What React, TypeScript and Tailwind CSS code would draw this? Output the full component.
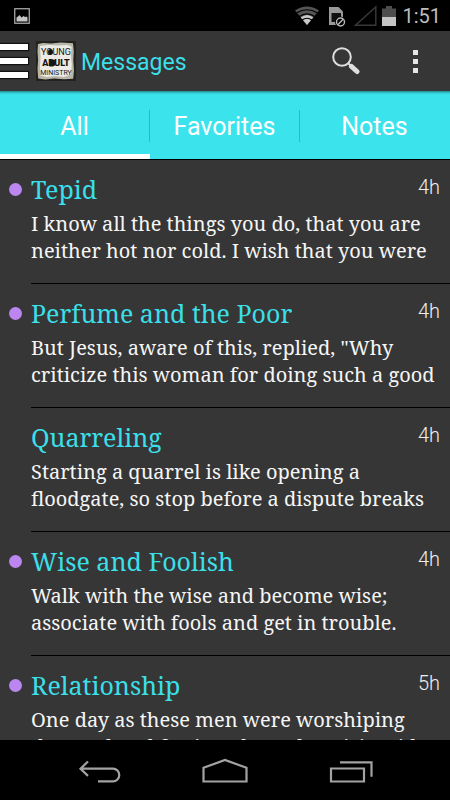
import React, { useState } from 'react';

interface Message {
    id: number;
    title: string;
    body: string;
    age: string;
    unread: boolean;
}

const messages: Message[] = [
    { id: 1, title: 'Tepid', body: 'I know all the things you do, that you are neither hot nor cold. I wish that you were', age: '4h', unread: true },
    { id: 2, title: 'Perfume and the Poor', body: 'But Jesus, aware of this, replied, "Why criticize this woman for doing such a good', age: '4h', unread: true },
    { id: 3, title: 'Quarreling', body: 'Starting a quarrel is like opening a floodgate, so stop before a dispute breaks', age: '4h', unread: false },
    { id: 4, title: 'Wise and Foolish', body: 'Walk with the wise and become wise; associate with fools and get in trouble.', age: '4h', unread: true },
    { id: 5, title: 'Relationship', body: 'One day as these men were worshiping the Lord and fasting, the Holy Spirit said', age: '5h', unread: true },
];

const tabs = ['All', 'Favorites', 'Notes'];

const StatusBar: React.FC = () => (
    <div className="flex h-[31px] shrink-0 items-center justify-between bg-black pl-[14px] pr-[9px]">
        <svg width="16" height="16" viewBox="0 0 16 16" aria-hidden="true">
            <rect x="0.75" y="0.75" width="14.5" height="14.5" fill="none" stroke="#b4b4b4" strokeWidth="1.2" />
            <path d="M2.500 13.500V9.500l1.500-1 1.500-1.500 2 2.500 2-1.500 1.500 1 1.500-.5 1 1v4z" fill="#c4c4c4" />
        </svg>
        <div className="flex items-center">
            <svg width="82" height="22" viewBox="0 0 82 22" aria-hidden="true">
                {/* wifi */}
                <path d="M0 5.500Q12 -2.500 24 5.500L12 20z" fill="#555" />
                <path d="M5.800 12.500Q12 7.500 18.200 12.500L12 20z" fill="#c9c9c9" />
                <path d="M1.500 8Q12 1.500 22.500 8M4.200 11.600Q12 6 19.800 11.600M7 15Q12 11.500 17 15" fill="none" stroke="#000" strokeWidth="1.200" />
                {/* sim card */}
                <path d="M34 2h9.500l4.500 4.500V20H34z" fill="#999" />
                <path d="M36.500 8h9.500v9h-9.500z" fill="#111" />
                <circle cx="45.500" cy="17" r="5.500" fill="#000" />
                <circle cx="45.500" cy="17" r="4" fill="none" stroke="#bbb" strokeWidth="1.400" />
                <path d="M42.800 19.700l5.400-5.400" stroke="#bbb" strokeWidth="1.400" />
                {/* signal */}
                <path d="M60.500 20.300H80.800V2z" fill="none" stroke="#383838" strokeWidth="1.500" />
            </svg>
            <svg className="ml-[5px]" width="14" height="20" viewBox="0 0 14 20" aria-hidden="true">
                <path d="M4 0h6v2.500h4V11H0V2.500h4z" fill="#4d4d4d" />
                <path d="M0 11h14v9H0z" fill="#c4c4c4" />
            </svg>
            <span className="ml-[6px] text-[20px] leading-[26px] text-[#bdbdbd]">1:51</span>
        </div>
    </div>
);

const Logo: React.FC = () => (
    <svg width="40" height="40" viewBox="0 0 40 40" role="img" aria-label="Young Adult Ministry">
        <rect width="40" height="40" fill="#24221f" />
        <path d="M2 3l5-1 8 .5L25 1.500l12 .8.800 8-.5 9 .7 10-.8 8.500-9 .4-10-.6-9 .8-7-.8L1.500 28l.6-9-.6-9z" fill="#b8b5a9" />
        <path d="M4 5l8-1 10 .5 9-.5 4.500 1.500-.5 9 .8 9-.8 10L28 36l-9-1-8 1-6.500-1.500L4 25l.6-9z" fill="#ecebe5" />
        <g fontFamily="Roboto, sans-serif" fill="#161616" textAnchor="middle">
            <text x="20" y="14" fontSize="9">YOUNG</text>
            <text x="20" y="25" fontSize="9" fontWeight="900">ADULT</text>
            <text x="20" y="34" fontSize="7">MINISTRY</text>
        </g>
        <ellipse cx="14.500" cy="11" rx="2.500" ry="3" fill="#161616" />
        <path d="M13.500 18.500h3q3.500 0 3.500 3.300T16.500 25.500h-3z" fill="#161616" />
    </svg>
);

const ActionBar: React.FC = () => (
    <header className="flex h-[60px] shrink-0 items-center bg-[#363636]">
        <button type="button" aria-label="Open menu" className="flex flex-col gap-2">
            <span className="h-[6px] w-7 bg-white shadow-[0_0_1px_1px_#111]" />
            <span className="h-[6px] w-7 bg-white shadow-[0_0_1px_1px_#111]" />
            <span className="h-[6px] w-7 bg-white shadow-[0_0_1px_1px_#111]" />
        </button>
        <div className="ml-2">
            <Logo />
        </div>
        <h1 className="ml-[5px] flex-1 pt-1 text-[23px] leading-8 text-[#3bdfe8]">Messages</h1>
        <button type="button" aria-label="Search" className="mr-[53px]">
            <svg width="28" height="28" viewBox="0 0 28 28">
                <circle cx="10" cy="10" r="8.800" fill="none" stroke="#dedede" strokeWidth="2" />
                <path d="M16 16l3.500 3.500" stroke="#dedede" strokeWidth="2" />
                <path d="M19.500 19.500l5.500 5" stroke="#dedede" strokeWidth="5" strokeLinecap="round" />
            </svg>
        </button>
        <button type="button" aria-label="More options" className="mr-8 flex flex-col gap-1">
            <span className="size-[5px] bg-[#e6e6e6]" />
            <span className="size-[5px] bg-[#e6e6e6]" />
            <span className="size-[5px] bg-[#e6e6e6]" />
        </button>
    </header>
);

const MessageRow: React.FC<{ message: Message }> = ({ message }) => (
    <li className="flex pl-[9px]">
        <div className="w-[22px] shrink-0 pt-[23px]">
            {message.unread && <span className="block size-[13px] rounded-full bg-[#bb86f0]" />}
        </div>
        <div className="h-[124px] min-w-0 flex-1 border-b border-black pt-[13px]">
            <div className="flex items-start justify-between pr-[10px]">
                <h2 className="font-['Noto_Serif','Droid_Serif',serif] text-[25px] leading-8 text-[#3bdfe8]">
                    {message.title}
                </h2>
                <span className="text-[20px] leading-7 font-light text-[#eee]">{message.age}</span>
            </div>
            <p className="mt-[5px] line-clamp-2 pr-[14px] font-['Noto_Serif','Droid_Serif',serif] text-[20px] leading-[27px] text-[#f5f5f5]">
                {message.body}
            </p>
        </div>
    </li>
);

const NavBar: React.FC = () => (
    <nav className="flex h-[60px] shrink-0 items-center justify-center gap-[80px] bg-black">
        <button type="button" aria-label="Back">
            <svg width="46" height="26" viewBox="0 0 46 26" fill="none" stroke="#a3a3a3" strokeWidth="2.200">
                <path d="M12 4.500L4.500 11.700l7.500 7.200M4.500 11.700H37a6.300 6.300 0 0 1 0 12.600H22" />
            </svg>
        </button>
        <button type="button" aria-label="Home">
            <svg width="46" height="26" viewBox="0 0 46 26" fill="none" stroke="#a3a3a3" strokeWidth="2.200">
                <path d="M1.500 24.500V10.800L23 3 44.500 10.800v13.700z" />
            </svg>
        </button>
        <button type="button" aria-label="Recent apps">
            <svg width="46" height="26" viewBox="0 0 46 26" fill="none" stroke="#a3a3a3" strokeWidth="2.200">
                <path d="M3 11.500H36v13H3zM12 5.300H43.500V19.700" />
            </svg>
        </button>
    </nav>
);

const App: React.FC = () => {
    const [active, setActive] = useState<string>('All');

    return (
        <div className="flex h-screen flex-col overflow-hidden bg-[#363636] font-[Roboto,sans-serif]">
            <StatusBar />
            <ActionBar />
            <div role="tablist" className="flex h-[69px] shrink-0 border-b border-black bg-[#3be4ec] shadow-[inset_0_4px_3px_-3px_#1d6f74]">
                {tabs.map((tab) => (
                    <button
                        key={tab}
                        type="button"
                        role="tab"
                        aria-selected={tab === active}
                        onClick={() => setActive(tab)}
                        className="group flex flex-1 flex-col"
                    >
                        <span className="mt-[19px] h-8 w-full border-r border-[#2bb9c2] pt-px text-[25px] leading-8 text-white group-last:border-transparent">
                            {tab}
                        </span>
                        <span className={tab === active ? 'mt-3 h-[5px] w-full bg-white' : 'mt-3 h-[5px] w-full'} />
                    </button>
                ))}
            </div>
            <ul className="min-h-0 flex-1 overflow-hidden">
                {messages.map((message) => (
                    <MessageRow key={message.id} message={message} />
                ))}
            </ul>
            <NavBar />
        </div>
    );
};

export default App;
